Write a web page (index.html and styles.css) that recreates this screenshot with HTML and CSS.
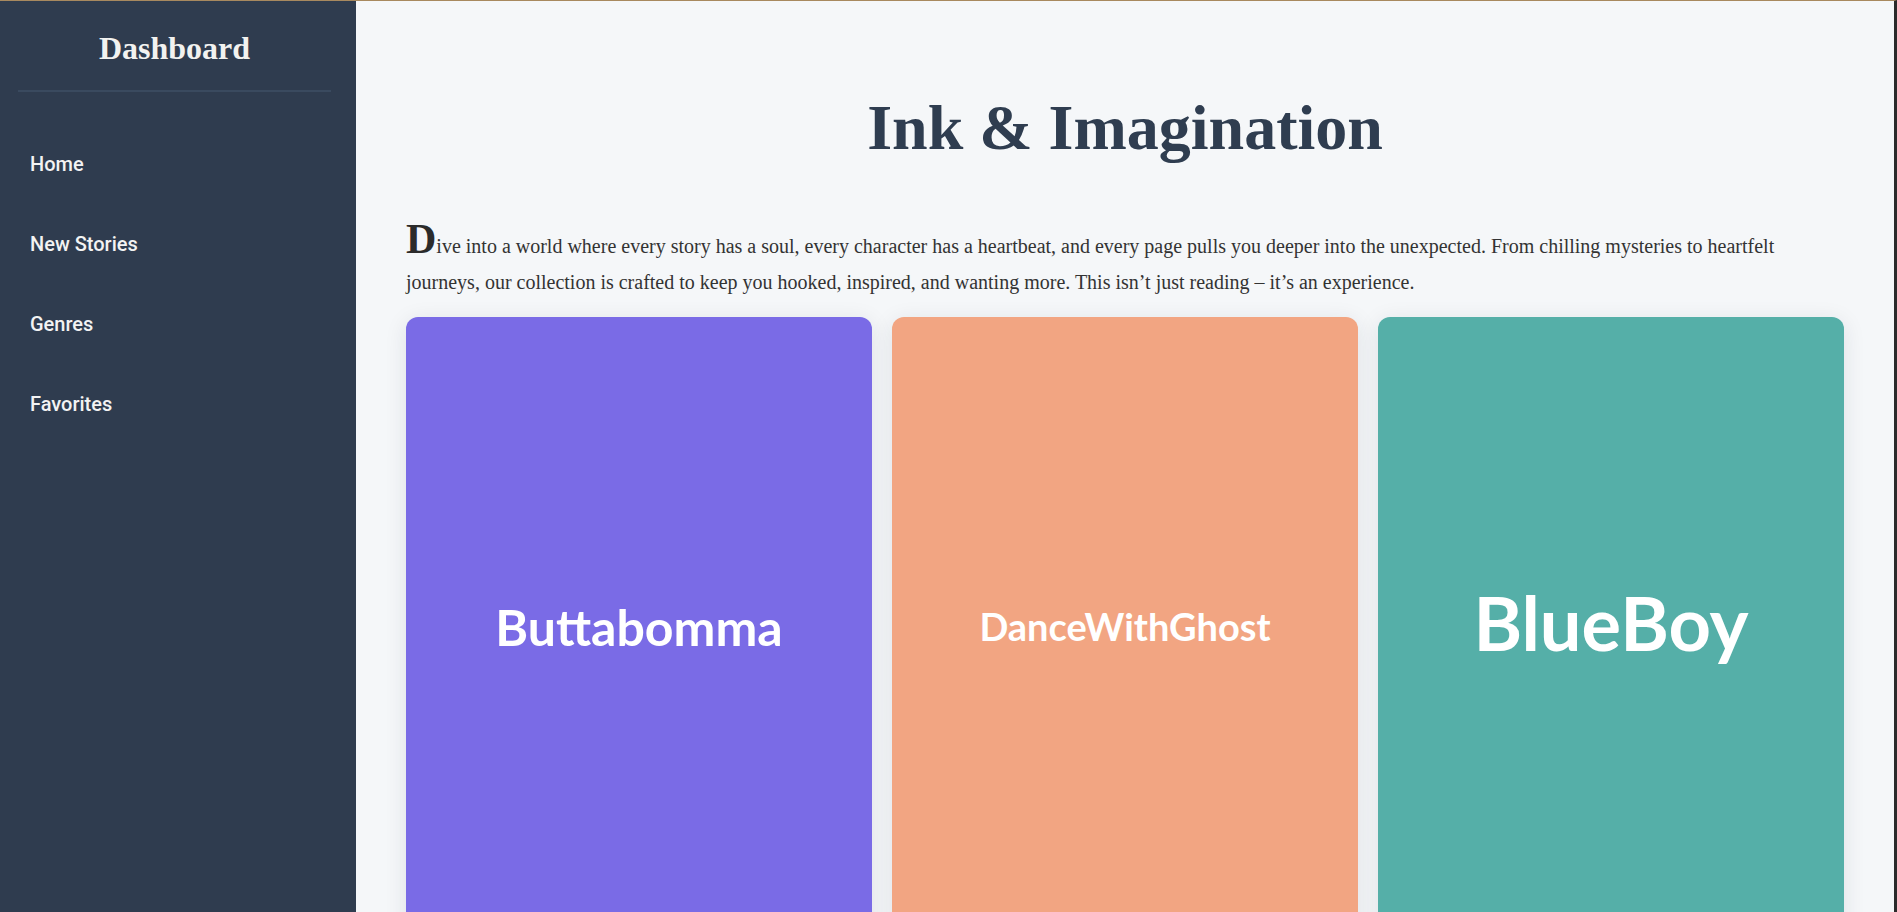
FILE: index.html
```html
<!DOCTYPE html>
<html lang="en">
<head>
<meta charset="utf-8">
<title>Ink &amp; Imagination</title>
<link rel="stylesheet" href="styles.css">
</head>
<body>
<div class="layout">
  <aside class="sidebar">
    <h2 class="brand">Dashboard</h2>
    <nav class="nav">
      <a class="nav-link" href="#">Home</a>
      <a class="nav-link" href="#">New Stories</a>
      <a class="nav-link" href="#">Genres</a>
      <a class="nav-link" href="#">Favorites</a>
    </nav>
  </aside>
  <main class="main">
    <h1 class="title">Ink &amp; Imagination</h1>
    <p class="intro">Dive into a world where every story has a soul, every character has a heartbeat, and every page pulls you deeper into the unexpected. From chilling mysteries to heartfelt journeys, our collection is crafted to keep you hooked, inspired, and wanting more. This isn’t just reading – it’s an experience.</p>
    <section class="cards">
      <div class="card card-purple"><span class="card-title t-butta">Buttabomma</span></div>
      <div class="card card-orange"><span class="card-title t-dance">DanceWithGhost</span></div>
      <div class="card card-teal"><span class="card-title t-blue">BlueBoy</span></div>
    </section>
  </main>
</div>
</body>
</html>
```

FILE: styles.css
```css
* { box-sizing: border-box; }

html, body {
  margin: 0;
  padding: 0;
  height: 100%;
}

body {
  background: #f5f7f9;
  border-top: 1px solid #a8895f;
  border-right: 3px solid #2b2b2b;
  overflow: hidden;
}

.layout {
  display: flex;
  height: 100%;
}

.sidebar {
  width: 356px;
  flex: 0 0 356px;
  background: #2f3c4f;
  padding: 0 25px 0 18px;
}

.brand {
  margin: 0;
  padding-top: 29px;
  padding-bottom: 24px;
  text-align: center;
  font-family: "Liberation Serif", "Times New Roman", serif;
  font-weight: 700;
  font-size: 32px;
  line-height: 36px;
  color: #f2f2f0;
  border-bottom: 2px solid #3a4a5f;
}

.nav {
  display: flex;
  flex-direction: column;
  padding-top: 32px;
}

.nav-link {
  display: block;
  padding: 28px 12px;
  font-family: Roboto, "Noto Sans", sans-serif;
  font-weight: 500;
  font-size: 20px;
  line-height: 24px;
  color: #f3f3f3;
  text-decoration: none;
}

.main {
  flex: 1;
  min-width: 0;
  padding: 88px 50px 0;
}

.title {
  margin: 0 0 52px;
  text-align: center;
  font-family: "Liberation Serif", "Times New Roman", serif;
  font-weight: 700;
  font-size: 64px;
  line-height: 77px;
  color: #2f3d50;
}

.intro {
  margin: 0 0 17px;
  font-family: "Liberation Serif", "Times New Roman", serif;
  font-size: 20px;
  line-height: 36px;
  color: #333333;
}

.intro::first-letter {
  font-size: 42px;
  font-weight: 700;
  line-height: 1;
  color: #2b2b2b;
}

.cards {
  display: grid;
  grid-template-columns: repeat(3, 1fr);
  gap: 20px;
}

.card {
  height: 620px;
  border-radius: 12px;
  display: flex;
  align-items: center;
  justify-content: center;
  box-shadow: 0 4px 22px rgba(30, 40, 60, 0.10);
}

.card-purple { background: #7a6be6; }
.card-orange { background: #f2a582; }
.card-teal { background: #55afa8; }

.card-title {
  font-family: Lato, "Noto Sans", sans-serif;
  color: #ffffff;
  line-height: 1.2;
  font-weight: 700;
}

.t-butta { font-size: 50px; }
.t-dance { font-size: 38px; }
.t-blue { font-size: 74px; margin-top: -8px; }
```
